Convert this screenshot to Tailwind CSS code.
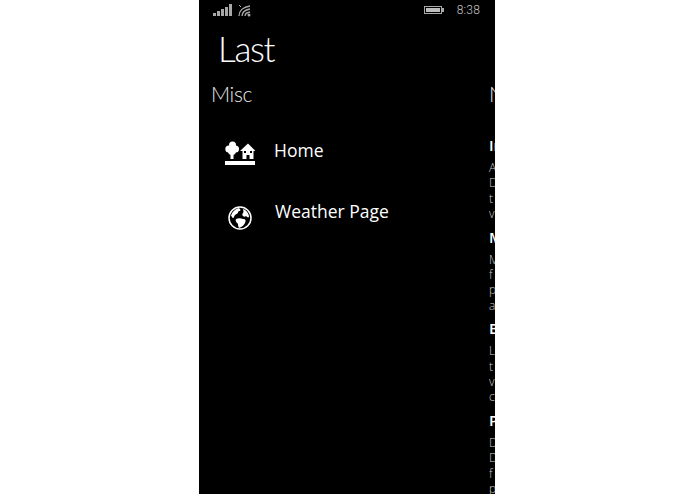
<!DOCTYPE html>
<html>
<head>
<meta charset="utf-8">
<script src="https://cdn.jsdelivr.net/npm/@tailwindcss/browser@4"></script>
</head>
<body class="bg-white">
<div class="ml-[199px] w-[296px] h-[494px] bg-black overflow-hidden text-white font-['Open_Sans',sans-serif]">
  <div class="h-[22px] flex items-center pl-[14px] pr-[15px] text-[#a8a8a8]">
    <svg width="19" height="12" viewBox="0 0 19 12" fill="#a8a8a8" class="mt-[-2px]"><rect x="0" y="9" width="3" height="3"/><rect x="4" y="7" width="3" height="5"/><rect x="8" y="5" width="3" height="7"/><rect x="12" y="3" width="3" height="9"/><rect x="16" y="0" width="3" height="12"/></svg>
    <svg width="14" height="13" viewBox="0 0 14 13" fill="none" stroke="#a8a8a8" stroke-width="1.300" class="ml-[6px] mt-[-2px]"><path d="M1 12C1 7 5 3 12 2"/><path d="M4 12C4 9 7 6 12 5"/><path d="M7 12C7 10 9 8.500 12 8"/><circle cx="11" cy="11" r="1.500" fill="#a8a8a8" stroke="none"/><path d="M1 1l2 2" stroke-width="1"/></svg>
    <div class="ml-auto flex items-center mt-[-2px]">
      <div class="w-[18px] h-[8px] border border-[#a8a8a8] p-px"><div class="w-full h-full bg-[#bdbdbd]"></div></div>
      <div class="w-[2px] h-[4px] bg-[#a8a8a8]"></div>
    </div>
    <span class="ml-[13px] text-[12px] leading-none font-['Roboto',sans-serif] font-light tracking-[0.2px] mt-[-2px] text-[#c0c0c0]">8:38</span>
  </div>
  <h1 class="pl-[19px] mt-[6px] text-[35px] leading-[40px] tracking-[-1.300px] font-['Lato',sans-serif] font-light">Last</h1>
  <div class="flex w-[600px] mt-[12px]">
    <section class="w-[290px] pl-[12px] shrink-0">
      <h2 class="text-[21px] leading-[28px] tracking-[-0.3px] font-['Lato',sans-serif] font-light text-[#e8e8e8]">Misc</h2>
      <div class="mt-[31px] flex items-start pl-[14px] h-[62px]">
        <svg width="30" height="24" viewBox="0 0 30 24" fill="#fff" class="mt-[2px]">
          <circle cx="7.500" cy="4" r="3.500"/><circle cx="3.800" cy="8" r="3.500"/><circle cx="10.500" cy="8" r="3.500"/><circle cx="7" cy="10" r="4"/>
          <rect x="5.500" y="10" width="3" height="8"/>
          <path d="M23 2.500L15 10h2.500v8h4v-4h3v4h4v-8h2z"/><rect x="19" y="10" width="2" height="2" fill="#000"/><rect x="25" y="10" width="2" height="2" fill="#000"/>
          <rect x="0" y="20" width="30" height="4"/>
        </svg>
        <span class="ml-[19px] text-[17.5px] leading-[24px] mt-[-1px]">Home</span>
      </div>
      <div class="flex items-start pl-[17px] h-[60px]">
        <svg width="24" height="24" viewBox="0 0 24 24" class="mt-[5px]">
          <circle cx="12" cy="12" r="11" fill="#000" stroke="#fff" stroke-width="1.500"/>
          <path d="M3 10C4 6 7 3 11 2c1 1 2 2 1 3-1 0-2 0-2 2-1 1-2 1-3 2s-1 3-2 3-1-2-2-2zM15 3c3 1 6 4 6 8-1 1-2 0-3-1-1 1-2 1-3 0s-1-2 0-3 0-3 0-4zM8 13c2-1 5-1 7 0 3 0 3 2 2 4-1 2-3 4-6 5-1-2-1-3-1-4-1-1-3-3-2-5z" fill="#fff"/>
        </svg>
        <span class="ml-[23px] text-[17.5px] leading-[24px] mt-[-2px]">Weather Page</span>
      </div>
    </section>
    <section class="w-[300px] shrink-0">
      <h2 class="text-[21px] leading-[28px] font-['Lato',sans-serif] font-light text-[#e8e8e8] whitespace-nowrap">News</h2>
      <div class="mt-[29px] text-[12px] leading-[15.4px] font-light text-[#c8c8c8] whitespace-nowrap">
        <h3 class="mt-[2px] text-[15px] leading-[16px] font-semibold text-white">Info</h3>
        <p class="mt-[7px]">A</p><p>D</p><p>t</p><p>v</p>
        <h3 class="mt-[7px] text-[15px] leading-[16px] font-semibold text-white">M</h3>
        <p class="mt-[7px]">M</p><p>f</p><p>p</p><p>a</p>
        <h3 class="mt-[7px] text-[15px] leading-[16px] font-semibold text-white">B</h3>
        <p class="mt-[7px]">L</p><p>t</p><p>v</p><p>c</p>
        <h3 class="mt-[7px] text-[15px] leading-[16px] font-semibold text-white">P</h3>
        <p class="mt-[7px]">D</p><p>D</p><p>f</p><p>p</p>
      </div>
    </section>
  </div>
</div>
</body>
</html>
